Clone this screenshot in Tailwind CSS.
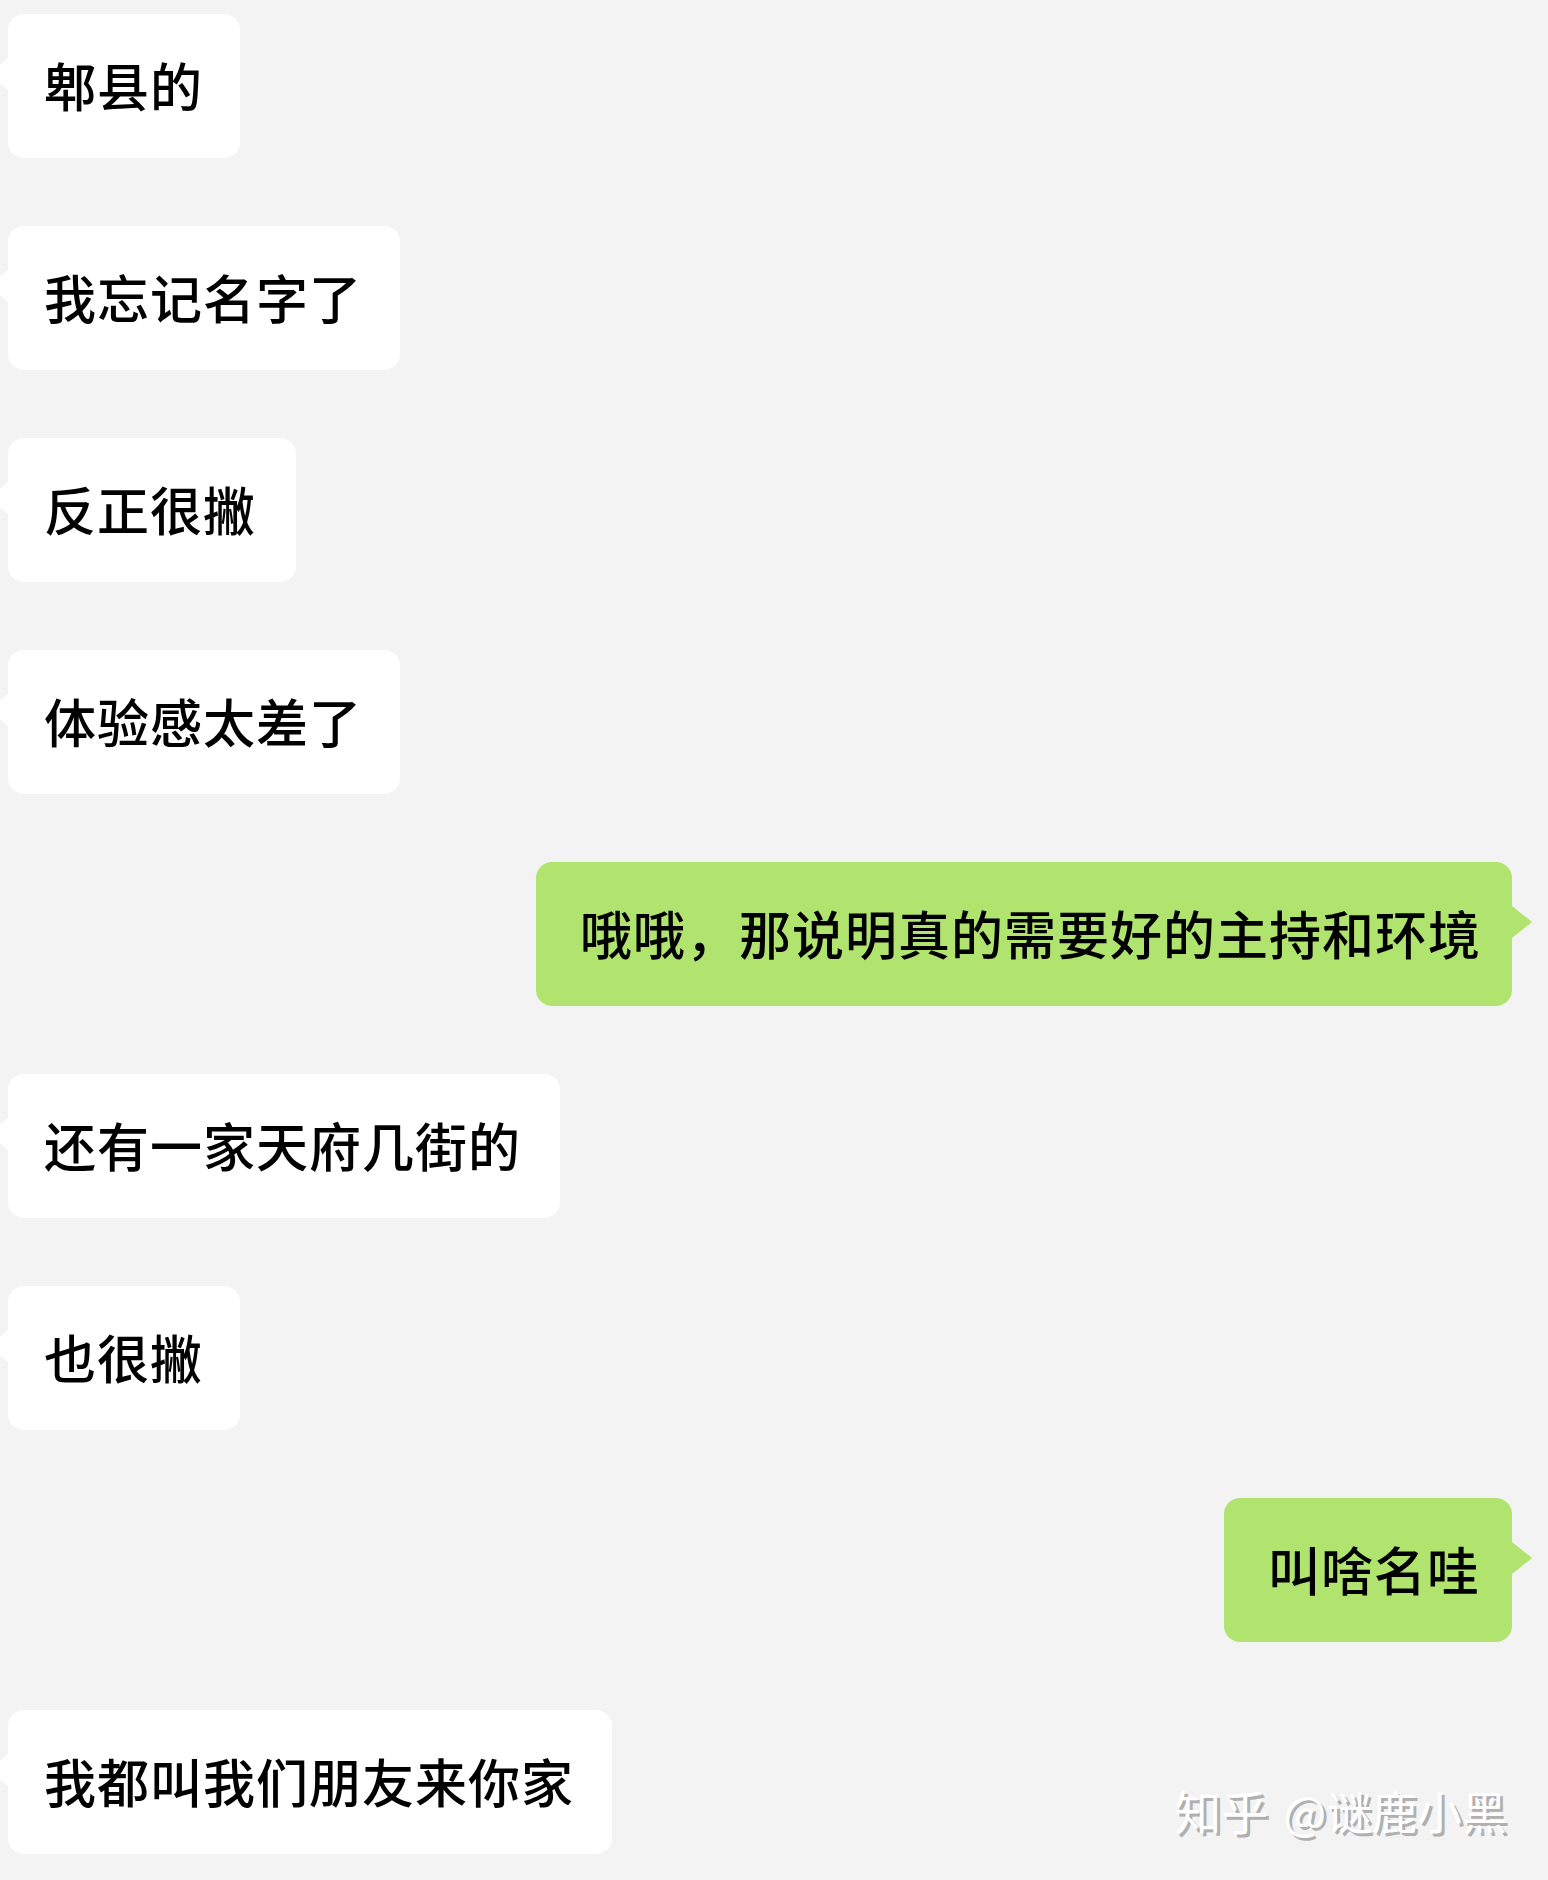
<!DOCTYPE html>
<html lang="zh-CN">
<head>
    <meta charset="UTF-8">
    <meta name="viewport" content="width=device-width, initial-scale=1.0">
    <title>聊天记录</title>
    <script src="https://cdn.jsdelivr.net/npm/@tailwindcss/browser@4"></script>
</head>
<body class="bg-[#f3f3f3] font-['Noto_Sans_CJK_SC',sans-serif]">
    <div class="relative w-[1548px] h-[1880px] overflow-hidden">
        <main class="flex flex-col items-start gap-[68px] pt-[14px] pl-2 pr-9 text-[52px] leading-[142px] tracking-[1px] font-medium text-black whitespace-nowrap">
            <div class="relative w-[232px] h-36 pl-9 rounded-2xl bg-white">
                <svg class="absolute top-11 -left-5 w-5 h-8 fill-white" viewBox="0 0 20 32"><path d="M20 0L0 16l20 16z"/></svg>
                <p>郫县的</p>
            </div>
            <div class="relative w-[392px] h-36 pl-9 rounded-2xl bg-white">
                <svg class="absolute top-11 -left-5 w-5 h-8 fill-white" viewBox="0 0 20 32"><path d="M20 0L0 16l20 16z"/></svg>
                <p>我忘记名字了</p>
            </div>
            <div class="relative w-72 h-36 pl-9 rounded-2xl bg-white">
                <svg class="absolute top-11 -left-5 w-5 h-8 fill-white" viewBox="0 0 20 32"><path d="M20 0L0 16l20 16z"/></svg>
                <p>反正很撇</p>
            </div>
            <div class="relative w-[392px] h-36 pl-9 rounded-2xl bg-white">
                <svg class="absolute top-11 -left-5 w-5 h-8 fill-white" viewBox="0 0 20 32"><path d="M20 0L0 16l20 16z"/></svg>
                <p>体验感太差了</p>
            </div>

            <div class="relative self-end w-[976px] h-36 pl-11 rounded-2xl bg-[#b0e46e]">
                <svg class="absolute top-11 -right-5 w-5 h-8 fill-[#b0e46e]" viewBox="0 0 20 32"><path d="M0 0l20 16L0 32z"/></svg>
                <p>哦哦，那说明真的需要好的主持和环境</p>
            </div>

            <div class="relative w-[552px] h-36 pl-9 rounded-2xl bg-white">
                <svg class="absolute top-11 -left-5 w-5 h-8 fill-white" viewBox="0 0 20 32"><path d="M20 0L0 16l20 16z"/></svg>
                <p>还有一家天府几街的</p>
            </div>
            <div class="relative w-[232px] h-36 pl-9 rounded-2xl bg-white">
                <svg class="absolute top-11 -left-5 w-5 h-8 fill-white" viewBox="0 0 20 32"><path d="M20 0L0 16l20 16z"/></svg>
                <p>也很撇</p>
            </div>

            <div class="relative self-end w-72 h-36 pl-11 rounded-2xl bg-[#b0e46e]">
                <svg class="absolute top-11 -right-5 w-5 h-8 fill-[#b0e46e]" viewBox="0 0 20 32"><path d="M0 0l20 16L0 32z"/></svg>
                <p>叫啥名哇</p>
            </div>

            <div class="relative w-[604px] h-36 pl-9 rounded-2xl bg-white">
                <svg class="absolute top-11 -left-5 w-5 h-8 fill-white" viewBox="0 0 20 32"><path d="M20 0L0 16l20 16z"/></svg>
                <p>我都叫我们朋友来你家</p>
            </div>
        </main>

        <!-- 水印 -->
        <div class="absolute right-[41px] bottom-[37px] text-[45px] leading-[64px] text-white whitespace-nowrap [text-shadow:3px_3px_0_#b0b0b0]"><span class="mr-[5px] text-[47px]">知乎</span> <span class="mr-px">@</span>谜鹿小黑</div>
    </div>
</body>
</html>
